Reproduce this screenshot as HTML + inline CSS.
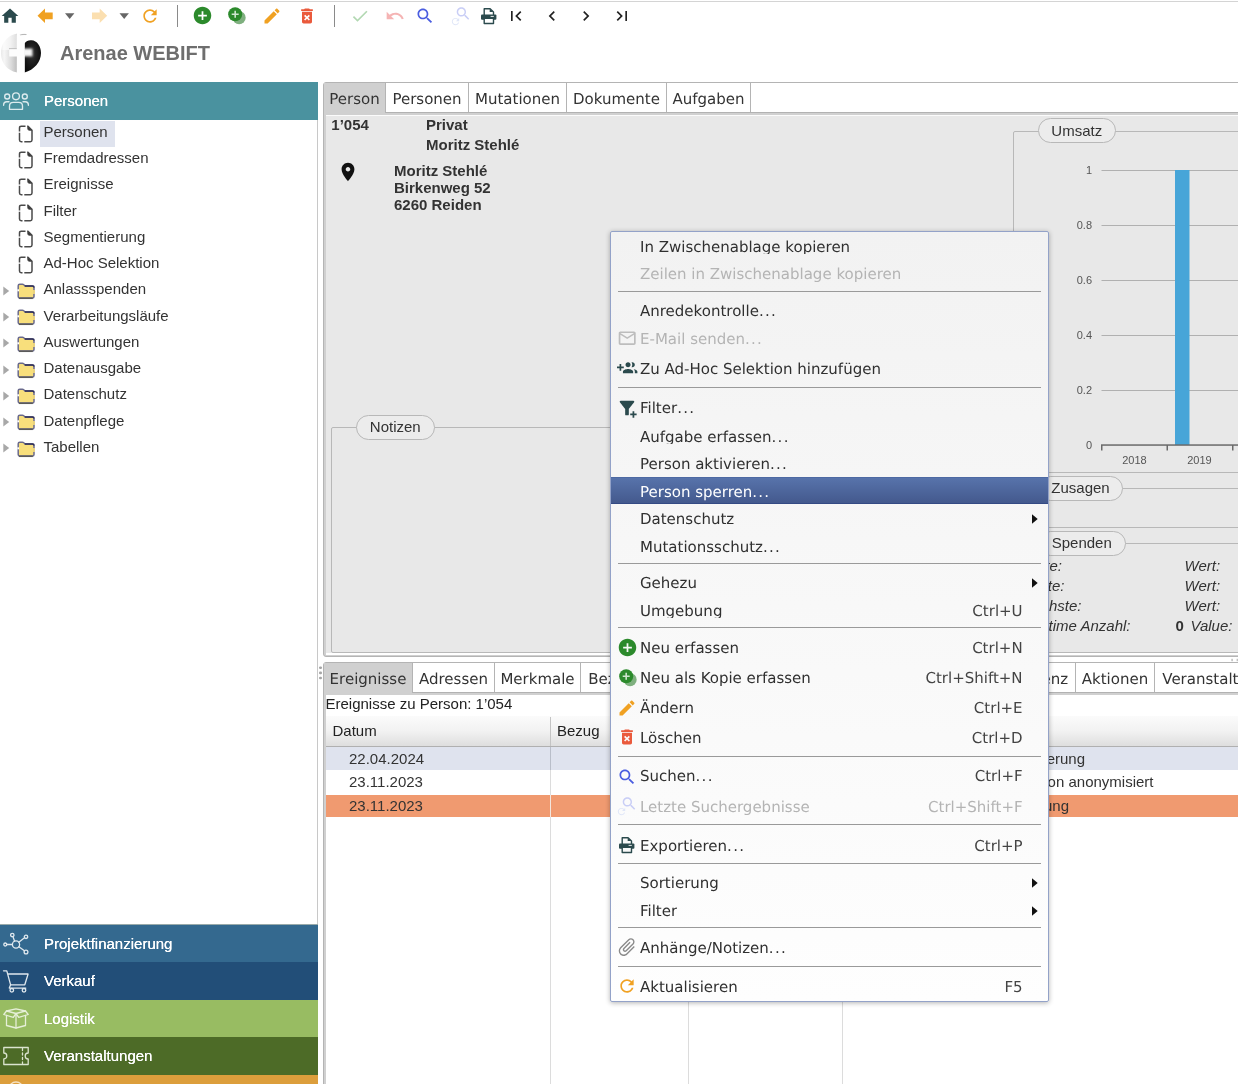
<!DOCTYPE html>
<html lang="de">
<head>
<meta charset="utf-8">
<title>Arenae WEBIFT</title>
<style>
*{box-sizing:border-box;margin:0;padding:0}
html,body{width:1238px;height:1084px;overflow:hidden;background:#fff}
body{position:relative;will-change:transform;font-family:"Liberation Sans",sans-serif;font-size:15px;color:#333}
.abs{position:absolute}
svg{display:block;position:absolute;overflow:visible}
.dv{font-family:"DejaVu Sans","Liberation Sans",sans-serif;text-rendering:geometricPrecision}
/* top */
#topline{left:0;top:1px;width:1238px;height:1px;background:#d4d4d4}
#title{left:60px;top:41px;font-size:20px;font-weight:bold;color:#6e6e6e;line-height:24px;white-space:nowrap}
/* sidebar */
#sidebar{left:0;top:82px;width:318px;height:1002px;background:#fff}
#sideborder{left:317px;top:82px;width:1px;height:1002px;background:#c8c8c8}
#split{left:319px;top:82px;width:4px;height:1002px;background:#fff}
.sec{left:0;width:318px;color:#fff;font-size:15px;line-height:38px;padding-left:44px;white-space:nowrap;text-shadow:0 0 0 #fff}
.ti{left:43.5px;font-size:15px;line-height:20px;white-space:nowrap;color:#333}
#tsel{left:40px;top:121px;width:75px;height:25.5px;background:#dfe3ee}
/* main */
#panel1{left:323px;top:82px;width:930px;height:575px;border:1px solid #b4b4b4;border-radius:3px;background:#d0d0d0}
#panel1 .tabs{left:0;top:0;width:928px;height:30px;background:#fff;border-bottom:1px solid #b2b2b2}
.tab{top:0;height:29px;font-size:15px;line-height:33px;white-space:nowrap;color:#333;border-right:1px solid #b4b4b4;text-align:center}
.tab.sel{background:#d0d0d0;height:30px}
.tab span{display:block;height:23.5px;overflow:hidden}
#content1{left:2px;top:32px;width:930px;height:538px;background:#e8e8e8}
.b{font-weight:bold;font-size:15px;line-height:17px;white-space:nowrap;color:#333}
.fs{border:1px solid #b8b8b8;border-radius:2px}
.lg{height:25px;border:1px solid #b8b8b8;border-radius:13px;background:#ececec;font-size:15px;line-height:23px;text-align:center;color:#333;white-space:nowrap}
.it{font-style:italic;font-size:15px;line-height:18px;white-space:nowrap;color:#333}
#panel2{left:323px;top:662px;width:930px;height:440px;border:1px solid #b4b4b4;border-radius:3px;background:#d0d0d0}
#panel2 .tabs{left:0;top:0;width:928px;height:30px;background:#fff;border-bottom:1px solid #b2b2b2}
#content2{left:2px;top:32px;width:930px;height:420px;background:#fff;overflow:hidden}
#ghead{background:linear-gradient(#fbfbfb,#f2f2f2 50%,#dedede);border-bottom:1px solid #b0b0b0}
.gh{font-size:15px;line-height:20px;color:#222;white-space:nowrap}
.gr{font-size:15px;line-height:20px;color:#333;white-space:nowrap}
#menu{border:1px solid #93a2c8;border-radius:2px;background:linear-gradient(#f2f2f2,#f7f7f7 40%,#fefefe);box-shadow:0 1px 5px rgba(0,0,0,.3)}
.mi{font-size:15px;line-height:20px;white-space:nowrap;color:#303030;overflow:hidden}
.el{letter-spacing:1.3px}
.mi.dis{color:#b4b4b4}
.mi.hl{color:#fff}
.mi.sc{color:#444}
.mi.sc.dis{color:#b4b4b4}
</style>
</head>
<body>
<div id="topline" class="abs"></div>
<!--TOOLBAR-->
<svg style="left:0px;top:6px" width="20" height="20" viewBox="0 0 24 24"><path fill="#2b4a4d" d="M10 20v-6h4v6h5v-8h3L12 3 2 12h3v8z"/></svg>
<svg style="left:0;top:0" width="660" height="32" viewBox="0 0 660 32"><polygon fill="#f0a122" points="37.5,15.8 45,8.5 45,12.4 52.7,12.4 52.7,19.2 45,19.2 45,23.1"/><polygon fill="#666" points="65,13.3 74.4,13.3 69.7,19"/><polygon fill="#fbdfb0" points="107.2,15.8 99.7,8.5 99.7,12.4 92,12.4 92,19.2 99.7,19.2 99.7,23.1"/><polygon fill="#666" points="119.5,13.3 128.9,13.3 124.2,19"/><rect x="177" y="5" width="1" height="22" fill="#8a8a8a"/><rect x="334" y="5" width="1" height="22" fill="#8a8a8a"/></svg>
<svg style="left:140px;top:6px" width="20" height="20" viewBox="0 0 24 24"><path fill="#f0a122" d="M17.65 6.35C16.2 4.9 14.21 4 12 4c-4.42 0-7.99 3.58-7.99 8s3.57 8 7.99 8c3.73 0 6.84-2.55 7.73-6h-2.08c-.82 2.33-3.04 4-5.65 4-3.31 0-6-2.69-6-6s2.69-6 6-6c1.66 0 3.14.69 4.22 1.78L13 11h7V4l-2.35 2.35z"/></svg>
<svg style="left:191.5px;top:5.4px" width="21" height="21" viewBox="0 0 24 24"><path fill="#2c8a2c" d="M12 2C6.48 2 2 6.48 2 12s4.48 10 10 10 10-4.480 10-10S17.520 2 12 2zm5 11h-4v4h-2v-4H7v-2h4V7h2v4h4v2z"/></svg>
<svg style="left:226px;top:5px" width="21" height="21" viewBox="0 0 24 24"><circle cx="15" cy="14.500" r="7.500" fill="#7fb07f"/><circle cx="10.500" cy="10.500" r="8" fill="#2c8a2c"/><path d="M6.500 10.500h8M10.500 6.500v8" stroke="#cfe6cf" stroke-width="1.800" fill="none"/></svg>
<svg style="left:262px;top:6px" width="20" height="20" viewBox="0 0 24 24"><path fill="#f0a122" d="M3 17.25V21h3.75L17.81 9.94l-3.75-3.75L3 17.25zM20.71 7.04c.39-.39.39-1.02 0-1.41l-2.34-2.34c-.39-.39-1.02-.39-1.41 0l-1.83 1.83 3.75 3.75 1.83-1.83z"/></svg>
<svg style="left:297px;top:6px" width="20" height="20" viewBox="0 0 24 24"><path fill="#ea5a3c" d="M6 19c0 1.1.9 2 2 2h8c1.1 0 2-.9 2-2V7H6v12zm2.460-7.120l1.410-1.410L12 12.590l2.120-2.120 1.410 1.410L13.410 14l2.120 2.120-1.410 1.410L12 15.410l-2.120 2.120-1.410-1.410L10.590 14l-2.130-2.120zM15.500 4l-1-1h-5l-1 1H5v2h14V4z"/></svg>
<svg style="left:350px;top:6px" width="20" height="20" viewBox="0 0 24 24"><path fill="#b2d8b2" d="M9 16.17L4.83 12l-1.420 1.410L9 19 21 7l-1.410-1.410z"/></svg>
<svg style="left:385px;top:6px" width="20" height="20" viewBox="0 0 24 24"><path fill="#f5b4b4" d="M12.500 8c-2.650 0-5.050.990-6.900 2.600L2 7v9h9l-3.620-3.620c1.390-1.160 3.160-1.880 5.120-1.880 3.540 0 6.550 2.310 7.600 5.500l2.370-.780C21.080 11.030 17.150 8 12.500 8z"/></svg>
<svg style="left:415px;top:6px" width="20" height="20" viewBox="0 0 24 24"><path fill="#4a5de0" d="M15.500 14h-.790l-.280-.270C15.410 12.590 16 11.110 16 9.500 16 5.910 13.090 3 9.500 3S3 5.910 3 9.500 5.910 16 9.500 16c1.610 0 3.090-.590 4.230-1.570l.270.280v.790l5 4.990L20.490 19l-4.990-5zm-6 0C7.010 14 5 11.990 5 9.500S7.010 5 9.500 5 14 7.010 14 9.500 11.990 14 9.500 14z"/></svg>
<svg style="left:449.500px;top:6px" width="22" height="22" viewBox="0 0 24 24"><g transform="translate(5,-1) scale(.78)"><path fill="#c9cef6" d="M15.500 14h-.790l-.280-.270C15.410 12.590 16 11.110 16 9.500 16 5.910 13.090 3 9.500 3S3 5.910 3 9.500 5.910 16 9.500 16c1.610 0 3.090-.590 4.230-1.570l.270.280v.790l5 4.990L20.490 19l-4.990-5zm-6 0C7.010 14 5 11.990 5 9.500S7.010 5 9.500 5 14 7.010 14 9.500 11.990 14 9.500 14z"/></g><g transform="translate(0,11) scale(.5)"><path fill="#dfe6f8" d="M17.65 6.35C16.2 4.9 14.21 4 12 4c-4.42 0-7.99 3.58-7.99 8s3.57 8 7.99 8c3.73 0 6.84-2.55 7.73-6h-2.08c-.82 2.33-3.04 4-5.65 4-3.31 0-6-2.69-6-6s2.69-6 6-6c1.66 0 3.14.69 4.22 1.78L13 11h7V4l-2.35 2.35z"/></g></svg>
<svg style="left:481.4px;top:8px" width="17" height="17" viewBox="0 0 17 17"><path d="M3.200 7V.700h5.900L12.500 4v3" fill="#fff" stroke="#2b4a4d" stroke-width="1.400" stroke-linejoin="round"/><path d="M8.700 .700v3.200h3.600z" fill="#2b4a4d"/><rect x="0" y="6.600" width="15.400" height="5.200" rx="1" fill="#2b4a4d"/><rect x="9.600" y="7.900" width="3.200" height="1.100" fill="#fff" opacity=".8"/><rect x="3.200" y="10.200" width="9.300" height="5.300" fill="#fff" stroke="#2b4a4d" stroke-width="1.400" stroke-linejoin="round"/></svg>
<svg style="left:506px;top:6px" width="20" height="20" viewBox="0 0 24 24"><path fill="#222" d="M18.410 16.590L13.820 12l4.590-4.590L17 6l-6 6 6 6zM6 6h2v12H6z"/></svg>
<svg style="left:542px;top:6px" width="20" height="20" viewBox="0 0 24 24"><path fill="#222" d="M15.410 7.410L14 6l-6 6 6 6 1.410-1.410L10.830 12z"/></svg>
<svg style="left:576px;top:6px" width="20" height="20" viewBox="0 0 24 24"><path fill="#222" d="M10 6L8.590 7.410 13.170 12l-4.580 4.590L10 18l6-6z"/></svg>
<svg style="left:612px;top:6px" width="20" height="20" viewBox="0 0 24 24"><path fill="#222" d="M5.590 7.410L10.180 12l-4.590 4.590L7 18l6-6-6-6zM16 6h2v12h-2z"/></svg>
<!--LOGO-->
<svg style="left:0;top:32px" width="44" height="44" viewBox="0 32 44 44">
<defs>
<linearGradient id="lgU" x1="0" y1="0" x2="1" y2="0"><stop offset="0" stop-color="#e9e9e9"/><stop offset=".22" stop-color="#fbfbfb"/><stop offset=".6" stop-color="#f3f3f3"/><stop offset="1" stop-color="#dedede"/></linearGradient>
<linearGradient id="lgL" x1="0" y1="0" x2="1" y2="0"><stop offset="0" stop-color="#e6e6e6"/><stop offset=".25" stop-color="#f6f6f6"/><stop offset=".65" stop-color="#dcdcdc"/><stop offset="1" stop-color="#bdbdbd"/></linearGradient>
<radialGradient id="lgB" cx="45%" cy="42%" r="70%"><stop offset="0" stop-color="#333"/><stop offset=".6" stop-color="#161616"/><stop offset="1" stop-color="#060606"/></radialGradient>
<filter id="lgF" x="-30%" y="-30%" width="160%" height="160%"><feGaussianBlur stdDeviation="1"/></filter>
<filter id="lgS" x="-30%" y="-30%" width="160%" height="160%"><feGaussianBlur stdDeviation="0.600"/></filter>
<clipPath id="lgC"><path d="M24.600 43.500 C26 40.500 29 40 31.500 40.200 C37 40.500 41 46 41 53 C41 62 34 70 24.600 72.500Z"/></clipPath>
<clipPath id="lgD"><path d="M27 34 C10 30.500 1 42 1 53 C1 64 9 73 22 73 L25 72.500 L25 36 Z"/></clipPath>
</defs>
<g clip-path="url(#lgD)">
<rect x="0" y="32" width="17" height="18" fill="url(#lgU)"/>
<rect x="0" y="50" width="17" height="24" fill="url(#lgL)"/>
<rect x="9" y="48.200" width="8" height="1.300" fill="#bcbcbc" filter="url(#lgS)"/>
<path d="M20 35.300 C22 34.300 24.500 34 27.500 34.600" stroke="#b8b8b8" stroke-width="1.300" fill="none" filter="url(#lgS)"/>
</g>
<path d="M24.600 43.500 C26 40.500 29 40 31.500 40.200 C37 40.500 41 46 41 53 C41 62 34 70 24.600 72.500Z" fill="url(#lgB)"/>
<g clip-path="url(#lgC)"><rect x="23" y="48.600" width="9.500" height="7.800" fill="#f6f6f6" filter="url(#lgF)"/></g>
<rect x="16.800" y="35.300" width="7.800" height="37.600" fill="#fefefe"/>
<rect x="9.200" y="49.200" width="15.400" height="7.300" fill="#fdfdfd"/>
</svg>
<div id="title" class="abs">Arenae WEBIFT</div>
<!--SIDEBAR-->
<div id="sidebar" class="abs"></div><div id="sideborder" class="abs"></div>
<div class="abs sec" style="top:82px;height:38px;background:#4a929f;line-height:37.5px">Personen</div>
<svg style="left:2px;top:90px" width="28" height="22" viewBox="0 0 28 22" fill="none" stroke="#dcebee" stroke-width="1.350" stroke-linecap="round" stroke-linejoin="round"><circle cx="14" cy="6.300" r="3.400"/><circle cx="5.200" cy="6.500" r="2.500"/><circle cx="22.800" cy="6.500" r="2.500"/><path d="M7.500 19.300v-3.300c0-2.200 1.600-3.600 3.800-3.600h5.400c2.200 0 3.800 1.400 3.800 3.600v3.300z"/><path d="M1.600 15.200c0-2.200 1.300-3.500 3.200-3.500h2.200M26.400 15.200c0-2.200-1.300-3.500-3.200-3.500h-2.200"/></svg>
<div id="tsel" class="abs"></div>
<div class="abs ti" style="top:121.80px">Personen</div>
<svg style="left:18px;top:125.2px" width="16" height="19" viewBox="0 0 16 19" fill="none" stroke="#4a4a4a" stroke-width="1.500" stroke-linejoin="round"><path d="M7.500 1.200H3.200c-1.100 0-1.700.600-1.700 1.700v3.500M1.500 7.800v7.200c0 1.100.600 1.700 1.700 1.700h1.300M6.300 16.700h6c1.100 0 1.700-.600 1.700-1.700V5.200L10 1.200H9.300"/><path d="M9.800 1.300v2.500c0 .900.500 1.400 1.400 1.400h2.600z" fill="#333" stroke-width="1"/></svg>
<div class="abs ti" style="top:148.05px">Fremdadressen</div>
<svg style="left:18px;top:151.4px" width="16" height="19" viewBox="0 0 16 19" fill="none" stroke="#4a4a4a" stroke-width="1.500" stroke-linejoin="round"><path d="M7.500 1.200H3.200c-1.100 0-1.700.600-1.700 1.700v3.500M1.500 7.800v7.200c0 1.100.600 1.700 1.700 1.700h1.300M6.300 16.700h6c1.100 0 1.700-.600 1.700-1.700V5.200L10 1.200H9.300"/><path d="M9.800 1.300v2.500c0 .900.500 1.400 1.400 1.400h2.600z" fill="#333" stroke-width="1"/></svg>
<div class="abs ti" style="top:174.30px">Ereignisse</div>
<svg style="left:18px;top:177.7px" width="16" height="19" viewBox="0 0 16 19" fill="none" stroke="#4a4a4a" stroke-width="1.500" stroke-linejoin="round"><path d="M7.500 1.200H3.200c-1.100 0-1.700.600-1.700 1.700v3.500M1.500 7.800v7.200c0 1.100.600 1.700 1.700 1.700h1.300M6.300 16.700h6c1.100 0 1.700-.600 1.700-1.700V5.200L10 1.200H9.300"/><path d="M9.800 1.300v2.500c0 .900.500 1.400 1.400 1.400h2.600z" fill="#333" stroke-width="1"/></svg>
<div class="abs ti" style="top:200.55px">Filter</div>
<svg style="left:18px;top:203.9px" width="16" height="19" viewBox="0 0 16 19" fill="none" stroke="#4a4a4a" stroke-width="1.500" stroke-linejoin="round"><path d="M7.500 1.200H3.200c-1.100 0-1.700.600-1.700 1.700v3.500M1.500 7.800v7.200c0 1.100.600 1.700 1.700 1.700h1.300M6.300 16.700h6c1.100 0 1.700-.600 1.700-1.700V5.200L10 1.200H9.300"/><path d="M9.800 1.300v2.500c0 .900.500 1.400 1.400 1.400h2.600z" fill="#333" stroke-width="1"/></svg>
<div class="abs ti" style="top:226.80px">Segmentierung</div>
<svg style="left:18px;top:230.2px" width="16" height="19" viewBox="0 0 16 19" fill="none" stroke="#4a4a4a" stroke-width="1.500" stroke-linejoin="round"><path d="M7.500 1.200H3.200c-1.100 0-1.700.600-1.700 1.700v3.500M1.500 7.800v7.200c0 1.100.600 1.700 1.700 1.700h1.300M6.300 16.700h6c1.100 0 1.700-.600 1.700-1.700V5.200L10 1.200H9.300"/><path d="M9.800 1.300v2.500c0 .900.500 1.400 1.400 1.400h2.600z" fill="#333" stroke-width="1"/></svg>
<div class="abs ti" style="top:253.05px">Ad-Hoc Selektion</div>
<svg style="left:18px;top:256.4px" width="16" height="19" viewBox="0 0 16 19" fill="none" stroke="#4a4a4a" stroke-width="1.500" stroke-linejoin="round"><path d="M7.500 1.200H3.200c-1.100 0-1.700.600-1.700 1.700v3.500M1.500 7.800v7.200c0 1.100.600 1.700 1.700 1.700h1.300M6.300 16.700h6c1.100 0 1.700-.600 1.700-1.700V5.200L10 1.200H9.300"/><path d="M9.800 1.300v2.500c0 .900.500 1.400 1.400 1.400h2.600z" fill="#333" stroke-width="1"/></svg>
<div class="abs ti" style="top:279.30px">Anlassspenden</div>
<svg style="left:16px;top:283.0px" width="20" height="17" viewBox="0 0 20 17"><path d="M2.200 2.800c0-1 .600-1.600 1.600-1.600h2.600c.600 0 1 .200 1.400.600l1.300 1.200h7.300c1 0 1.600.600 1.600 1.600v8.800c0 1-.600 1.600-1.600 1.600H3.800c-1 0-1.600-.600-1.600-1.600z" fill="#f8df7c" stroke="#6a6a8c" stroke-width="1.500"/><path d="M8.800 3h7.600c1 0 1.600.600 1.600 1.600" fill="none" stroke="#2c2c55" stroke-width="1.500"/><path d="M3 15.300h13.800" stroke="#5a5a5a" stroke-width="1.500"/><path d="M2.200 6.300v2" stroke="#fff" stroke-width="1.700"/><path d="M18 7v4" stroke="#f8df7c" stroke-width="1.700"/></svg><svg style="left:3px;top:285.8px" width="7" height="10" viewBox="0 0 7 10"><path d="M.300.500L6.200 5 .300 9.500z" fill="#a8a8a8"/></svg>
<div class="abs ti" style="top:305.55px">Verarbeitungsläufe</div>
<svg style="left:16px;top:309.2px" width="20" height="17" viewBox="0 0 20 17"><path d="M2.200 2.800c0-1 .600-1.600 1.600-1.600h2.600c.600 0 1 .200 1.400.600l1.300 1.200h7.300c1 0 1.600.600 1.600 1.600v8.800c0 1-.600 1.600-1.600 1.600H3.800c-1 0-1.600-.600-1.600-1.600z" fill="#f8df7c" stroke="#6a6a8c" stroke-width="1.500"/><path d="M8.800 3h7.600c1 0 1.600.600 1.600 1.600" fill="none" stroke="#2c2c55" stroke-width="1.500"/><path d="M3 15.300h13.800" stroke="#5a5a5a" stroke-width="1.500"/><path d="M2.200 6.300v2" stroke="#fff" stroke-width="1.700"/><path d="M18 7v4" stroke="#f8df7c" stroke-width="1.700"/></svg><svg style="left:3px;top:312.1px" width="7" height="10" viewBox="0 0 7 10"><path d="M.300.500L6.200 5 .300 9.500z" fill="#a8a8a8"/></svg>
<div class="abs ti" style="top:331.80px">Auswertungen</div>
<svg style="left:16px;top:335.5px" width="20" height="17" viewBox="0 0 20 17"><path d="M2.200 2.800c0-1 .600-1.600 1.600-1.600h2.600c.600 0 1 .200 1.400.600l1.300 1.200h7.300c1 0 1.600.600 1.600 1.600v8.800c0 1-.600 1.600-1.600 1.600H3.800c-1 0-1.600-.600-1.600-1.600z" fill="#f8df7c" stroke="#6a6a8c" stroke-width="1.500"/><path d="M8.800 3h7.600c1 0 1.600.600 1.600 1.600" fill="none" stroke="#2c2c55" stroke-width="1.500"/><path d="M3 15.300h13.800" stroke="#5a5a5a" stroke-width="1.500"/><path d="M2.200 6.300v2" stroke="#fff" stroke-width="1.700"/><path d="M18 7v4" stroke="#f8df7c" stroke-width="1.700"/></svg><svg style="left:3px;top:338.3px" width="7" height="10" viewBox="0 0 7 10"><path d="M.300.500L6.200 5 .300 9.500z" fill="#a8a8a8"/></svg>
<div class="abs ti" style="top:358.05px">Datenausgabe</div>
<svg style="left:16px;top:361.8px" width="20" height="17" viewBox="0 0 20 17"><path d="M2.200 2.800c0-1 .600-1.600 1.600-1.600h2.600c.600 0 1 .200 1.400.600l1.300 1.200h7.300c1 0 1.600.600 1.600 1.600v8.800c0 1-.600 1.600-1.600 1.600H3.800c-1 0-1.600-.600-1.600-1.600z" fill="#f8df7c" stroke="#6a6a8c" stroke-width="1.500"/><path d="M8.800 3h7.600c1 0 1.600.600 1.600 1.600" fill="none" stroke="#2c2c55" stroke-width="1.500"/><path d="M3 15.300h13.800" stroke="#5a5a5a" stroke-width="1.500"/><path d="M2.200 6.300v2" stroke="#fff" stroke-width="1.700"/><path d="M18 7v4" stroke="#f8df7c" stroke-width="1.700"/></svg><svg style="left:3px;top:364.6px" width="7" height="10" viewBox="0 0 7 10"><path d="M.300.500L6.200 5 .300 9.500z" fill="#a8a8a8"/></svg>
<div class="abs ti" style="top:384.30px">Datenschutz</div>
<svg style="left:16px;top:388.0px" width="20" height="17" viewBox="0 0 20 17"><path d="M2.200 2.800c0-1 .600-1.600 1.600-1.600h2.600c.600 0 1 .200 1.400.600l1.300 1.200h7.300c1 0 1.600.600 1.600 1.600v8.800c0 1-.600 1.600-1.600 1.600H3.800c-1 0-1.600-.600-1.600-1.600z" fill="#f8df7c" stroke="#6a6a8c" stroke-width="1.500"/><path d="M8.800 3h7.600c1 0 1.600.600 1.600 1.600" fill="none" stroke="#2c2c55" stroke-width="1.500"/><path d="M3 15.300h13.800" stroke="#5a5a5a" stroke-width="1.500"/><path d="M2.200 6.300v2" stroke="#fff" stroke-width="1.700"/><path d="M18 7v4" stroke="#f8df7c" stroke-width="1.700"/></svg><svg style="left:3px;top:390.8px" width="7" height="10" viewBox="0 0 7 10"><path d="M.300.500L6.200 5 .300 9.500z" fill="#a8a8a8"/></svg>
<div class="abs ti" style="top:410.55px">Datenpflege</div>
<svg style="left:16px;top:414.2px" width="20" height="17" viewBox="0 0 20 17"><path d="M2.200 2.800c0-1 .600-1.600 1.600-1.600h2.600c.600 0 1 .200 1.400.600l1.300 1.200h7.300c1 0 1.600.600 1.600 1.600v8.800c0 1-.600 1.600-1.600 1.600H3.800c-1 0-1.600-.600-1.600-1.600z" fill="#f8df7c" stroke="#6a6a8c" stroke-width="1.500"/><path d="M8.800 3h7.600c1 0 1.600.600 1.600 1.600" fill="none" stroke="#2c2c55" stroke-width="1.500"/><path d="M3 15.300h13.800" stroke="#5a5a5a" stroke-width="1.500"/><path d="M2.200 6.300v2" stroke="#fff" stroke-width="1.700"/><path d="M18 7v4" stroke="#f8df7c" stroke-width="1.700"/></svg><svg style="left:3px;top:417.1px" width="7" height="10" viewBox="0 0 7 10"><path d="M.300.500L6.200 5 .300 9.500z" fill="#a8a8a8"/></svg>
<div class="abs ti" style="top:436.80px">Tabellen</div>
<svg style="left:16px;top:440.5px" width="20" height="17" viewBox="0 0 20 17"><path d="M2.200 2.800c0-1 .600-1.600 1.600-1.600h2.600c.600 0 1 .200 1.400.600l1.300 1.200h7.300c1 0 1.600.600 1.600 1.600v8.800c0 1-.600 1.600-1.600 1.600H3.800c-1 0-1.600-.600-1.600-1.600z" fill="#f8df7c" stroke="#6a6a8c" stroke-width="1.500"/><path d="M8.800 3h7.600c1 0 1.600.600 1.600 1.600" fill="none" stroke="#2c2c55" stroke-width="1.500"/><path d="M3 15.300h13.800" stroke="#5a5a5a" stroke-width="1.500"/><path d="M2.200 6.300v2" stroke="#fff" stroke-width="1.700"/><path d="M18 7v4" stroke="#f8df7c" stroke-width="1.700"/></svg><svg style="left:3px;top:443.3px" width="7" height="10" viewBox="0 0 7 10"><path d="M.300.500L6.200 5 .300 9.500z" fill="#a8a8a8"/></svg>
<div class="abs" style="left:0;top:923.5px;width:318px;height:1px;background:#9aa"></div>
<div class="abs sec" style="top:924.5px;height:38px;background:#34698f">Projektfinanzierung</div>
<div class="abs sec" style="top:962px;height:38px;background:#224e78">Verkauf</div>
<div class="abs sec" style="top:999.5px;height:38px;background:#98bc62">Logistik</div>
<div class="abs sec" style="top:1037px;height:38px;background:#4d6b27">Veranstaltungen</div>
<div class="abs" style="left:0;top:1074.500px;width:318px;height:10px;background:#dc9e3c"></div>
<svg style="left:2px;top:932px" width="28" height="24" viewBox="0 0 28 24" fill="none" stroke="#dfe8ee" stroke-width="1.300" stroke-linecap="round" stroke-linejoin="round"><circle cx="14" cy="12.500" r="3.600"/><circle cx="3.300" cy="12.500" r="1.500"/><circle cx="10.300" cy="3" r="1.700"/><circle cx="24" cy="4.800" r="1.700"/><circle cx="24" cy="20" r="1.900"/><path d="M4.800 12.500h5.600M10.900 4.600l1.700 4.600M16.800 10.200l5.700-4.500M16.900 14.800l5.500 4"/></svg>
<svg style="left:2px;top:969px" width="28" height="25" viewBox="0 0 28 25" fill="none" stroke="#dfe8ee" stroke-width="1.300" stroke-linecap="round" stroke-linejoin="round"><path d="M1.500 1.800h3.300l3.800 14h14.200l3.300-10.800H6.300"/><path d="M8.600 15.800l-1.300 3.300h16.500"/><circle cx="9.800" cy="21.300" r="1.800"/><circle cx="22" cy="21.300" r="1.800"/></svg>
<svg style="left:2px;top:1007px" width="28" height="23" viewBox="0 0 28 23" stroke="#e6efd8" fill="none" stroke-width="1.300" stroke-linecap="round" stroke-linejoin="round"><path d="M4.500 8.500v10l9.500 2.500 9.500-2.500v-10"/><path d="M14 6.500v14.500"/><path d="M14 6.500L4.500 4 1.800 7.500l9.500 2.800zM14 6.500L23.500 4l2.700 3.500-9.500 2.800z"/><path d="M4.500 4L14 1.800 23.500 4"/></svg>
<svg style="left:2px;top:1046px" width="28" height="20" viewBox="0 0 28 20" stroke="#dbe4cf" fill="none" stroke-width="1.300" stroke-linecap="round" stroke-linejoin="round"><path d="M1.800 1.500h24.400v5.500a3 3 0 0 0 0 6v5.500H1.800v-5.500a3 3 0 0 0 0-6z"/><path d="M20.500 2.500v2M20.500 7v2M20.500 11.500v2M20.500 16v1.500"/></svg>
<svg style="left:8px;top:1080.500px" width="16" height="8" viewBox="0 0 16 8" fill="none" stroke="#f6e3c4" stroke-width="1.300"><circle cx="8" cy="8" r="7"/></svg>
<!--MAIN-->
<div id="panel1" class="abs">
<div class="abs tabs"></div>
<div class="abs tab dv sel" style="left:0px;width:62px"><span>Person</span></div>
<div class="abs tab dv" style="left:62px;width:83px"><span>Personen</span></div>
<div class="abs tab dv" style="left:145px;width:98px"><span>Mutationen</span></div>
<div class="abs tab dv" style="left:243px;width:100px"><span>Dokumente</span></div>
<div class="abs tab dv" style="left:343px;width:84px"><span>Aufgaben</span></div>
<div id="content1" class="abs">
<div class="abs toplight" style="left:0;top:0;width:930px;height:1.200px;background:#fbfbfb"></div>
<div class="abs b" style="left:5.3px;top:1.1px;">1’054</div>
<div class="abs b" style="left:100.0px;top:1.1px;">Privat</div>
<div class="abs b" style="left:100.0px;top:21.2px;">Moritz Stehlé</div>
<div class="abs b" style="left:68.0px;top:46.7px;">Moritz Stehlé</div>
<div class="abs b" style="left:68.0px;top:63.9px;">Birkenweg 52</div>
<div class="abs b" style="left:68.0px;top:80.9px;">6260 Reiden</div>
<svg style="left:11.0px;top:46.3px" width="22" height="22" viewBox="0 0 24 24"><path fill="#111" d="M12 2C8.130 2 5 5.130 5 9c0 5.250 7 13 7 13s7-7.750 7-13c0-3.870-3.130-7-7-7zm0 9.500c-1.380 0-2.500-1.120-2.500-2.500s1.120-2.500 2.500-2.500 2.500 1.120 2.500 2.500-1.120 2.500-2.500 2.500z"/></svg>
<div class="abs fs" style="left:5.0px;top:312.0px;width:675px;height:226px"></div>
<div class="abs lg" style="left:30.0px;top:300.0px;width:78.500px;line-height:22px">Notizen</div>
<div class="abs fs" style="left:687.0px;top:16.0px;width:260px;height:341.500px"></div>
<div class="abs lg" style="left:712.0px;top:3.0px;width:77.500px">Umsatz</div>
<svg style="left:694.0px;top:35.0px" width="220" height="330" viewBox="1020 150 220 330" font-family="Liberation Sans, sans-serif" font-size="11px" fill="#555"><rect x="1101.500" y="170" width="140" height="1" fill="#b0b0b0"/><text x="1092" y="174" text-anchor="end">1</text><rect x="1101.500" y="225" width="140" height="1" fill="#b0b0b0"/><text x="1092" y="229" text-anchor="end">0.8</text><rect x="1101.500" y="280" width="140" height="1" fill="#b0b0b0"/><text x="1092" y="284" text-anchor="end">0.6</text><rect x="1101.500" y="335" width="140" height="1" fill="#b0b0b0"/><text x="1092" y="339" text-anchor="end">0.4</text><rect x="1101.500" y="390" width="140" height="1" fill="#b0b0b0"/><text x="1092" y="394" text-anchor="end">0.2</text><text x="1092" y="449" text-anchor="end">0</text><rect x="1175" y="170" width="14.500" height="275" fill="#47a5d8"/><rect x="1101" y="444.300" width="140" height="1.500" fill="#6a6a6a"/><rect x="1101" y="445" width="1.500" height="5.500" fill="#6a6a6a"/><rect x="1166.5" y="445" width="1.500" height="5.500" fill="#6a6a6a"/><rect x="1232" y="445" width="1.500" height="5.500" fill="#6a6a6a"/><text x="1134.500" y="464" text-anchor="middle">2018</text><text x="1199.500" y="464" text-anchor="middle">2019</text></svg>
<div class="abs fs" style="left:687.0px;top:373.0px;width:260px;height:39.500px"></div>
<div class="abs lg" style="left:712.0px;top:361.0px;width:85px;line-height:21px">Zusagen</div>
<div class="abs fs" style="left:687.0px;top:428.0px;width:260px;height:110px"></div>
<div class="abs lg" style="left:712.0px;top:416.0px;width:87.500px;line-height:21px">Spenden</div>
<div class="abs it" style="right:194.0px;top:442.2px">Erste:</div>
<div class="abs it" style="left:858.5px;top:442.2px">Wert:</div>
<div class="abs it" style="right:191.5px;top:462.0px">Letzte:</div>
<div class="abs it" style="left:858.5px;top:462.0px">Wert:</div>
<div class="abs it" style="right:174.5px;top:481.9px">Höchste:</div>
<div class="abs it" style="left:858.5px;top:481.9px">Wert:</div>
<div class="abs it" style="right:125.5px;top:501.7px">Lifetime Anzahl:</div>
<div class="abs it" style="left:864.5px;top:501.7px">Value:</div>
<div class="abs b" style="left:849.5px;top:501.7px;line-height:18px">0</div>
</div>
<div class="abs" style="left:2px;top:570px;width:930px;height:1.500px;background:#fff"></div>
</div>
<!--LOWER-->
<svg style="left:318px;top:664px" width="6" height="20" viewBox="0 0 6 20"><rect x="1" y="2.400" width="3" height="2.600" rx="1.200" fill="#a6a6a6"/><rect x="1" y="7.600" width="3" height="2.600" rx="1.200" fill="#a6a6a6"/><rect x="1" y="12.700" width="3" height="2.600" rx="1.200" fill="#a6a6a6"/></svg>
<svg style="left:1228px;top:657px" width="12" height="6" viewBox="0 0 12 6"><rect x="3.300" y="1.800" width="1.600" height="2.400" fill="#c0c0c0"/><rect x="8.600" y="1.800" width="1.600" height="2.400" fill="#c0c0c0"/></svg>
<div id="panel2" class="abs">
<div class="abs tabs"></div>
<div class="abs tab dv sel" style="left:0px;width:89px"><span>Ereignisse</span></div>
<div class="abs tab dv" style="left:89px;width:82px"><span>Adressen</span></div>
<div class="abs tab dv" style="left:171px;width:86px"><span>Merkmale</span></div>
<div class="abs tab dv" style="left:257px;width:113px"><span>Beziehungen</span></div>
<div class="abs tab dv" style="left:626px;width:126px"><span>Korrespondenz</span></div>
<div class="abs tab dv" style="left:752px;width:79px"><span>Aktionen</span></div>
<div class="abs tab dv" style="left:831px;width:139px"><span>Veranstaltungen</span></div>
<div id="content2" class="abs">
<div class="abs" style="left:-0.5px;top:-0.9px;font-size:15px;line-height:20px;white-space:nowrap;color:#222">Ereignisse zu Person: 1’054</div>
<div class="abs" id="ghead" style="left:0;top:21.0px;width:930px;height:30.500px"></div>
<div class="abs gh" style="left:6.5px;top:25.5px">Datum</div>
<div class="abs gh" style="left:231.0px;top:25.5px">Bezug</div>
<div class="abs" style="left:224.0px;top:22.0px;width:1px;height:29px;background:#c4c4c4"></div>
<div class="abs" style="left:0;top:51.5px;width:930px;height:23px;background:#dfe3ee"></div>
<div class="abs gr" style="left:23.0px;top:53.6px">22.04.2024</div>
<div class="abs gr" style="right:171.0px;top:53.6px">Adressänderung</div>
<div class="abs" style="left:0;top:75.0px;width:930px;height:24px;background:#ffffff"></div>
<div class="abs gr" style="left:23.0px;top:76.7px">23.11.2023</div>
<div class="abs gr" style="right:102.5px;top:76.7px">Person anonymisiert</div>
<div class="abs" style="left:0;top:100.0px;width:930px;height:21.5px;background:#f09a70"></div>
<div class="abs gr" style="left:23.0px;top:100.7px">23.11.2023</div>
<div class="abs gr" style="right:187.0px;top:100.7px">Anonymisierung</div>
<div class="abs" style="left:224.0px;top:51.5px;width:1px;height:340px;background:#dcdcdc"></div>
<div class="abs" style="left:224.0px;top:51.5px;width:1px;height:23px;background:#b9bec9"></div>
<div class="abs" style="left:224.0px;top:100.0px;width:1px;height:21.500px;background:#f3e6de"></div>
<div class="abs" style="left:362.0px;top:51.5px;width:1px;height:340px;background:#dcdcdc"></div>
<div class="abs" style="left:362.0px;top:51.5px;width:1px;height:23px;background:#b9bec9"></div>
<div class="abs" style="left:362.0px;top:100.0px;width:1px;height:21.500px;background:#f3e6de"></div>
<div class="abs" style="left:516.0px;top:51.5px;width:1px;height:340px;background:#dcdcdc"></div>
<div class="abs" style="left:516.0px;top:51.5px;width:1px;height:23px;background:#b9bec9"></div>
<div class="abs" style="left:516.0px;top:100.0px;width:1px;height:21.500px;background:#f3e6de"></div>
</div></div>
<!--MENU-->
<div id="menu" class="abs dv" style="left:610px;top:231px;width:439px;height:771px">
<div class="abs mi" style="left:29.0px;top:4.7px;height:17.3px">In Zwischenablage kopieren</div>
<div class="abs mi dis" style="left:29.0px;top:31.5px;height:18.3px">Zeilen in Zwischenablage kopieren</div>
<div class="abs" style="left:6.5px;top:59.0px;width:423.500px;height:1px;background:#9a9a9a"></div>
<div class="abs mi" style="left:29.0px;top:68.7px;height:20px">Anredekontrolle<span class="el">...</span></div>
<div class="abs mi dis" style="left:29.0px;top:96.8px;height:20px">E-Mail senden<span class="el">...</span></div>
<svg style="left:6.0px;top:95.7px" width="20.4" height="20.4" viewBox="0 0 24 24"><path fill="#bdbdbd" d="M20 4H4c-1.100 0-1.990.900-1.990 2L2 18c0 1.100.900 2 2 2h16c1.100 0 2-.900 2-2V6c0-1.100-.900-2-2-2zm0 14H4V8l8 5 8-5v10zm-8-7L4 6h16l-8 5z"/></svg>
<div class="abs mi" style="left:29.0px;top:127.0px;height:18.3px">Zu Ad-Hoc Selektion hinzufügen</div>
<svg style="left:6.3px;top:125.5px" width="20.4" height="20.4" viewBox="0 0 24 24"><path fill="#2b4a4d" d="M8 10H5V7H3v3H0v2h3v3h2v-3h3v-2zm10 1c1.660 0 2.990-1.340 2.990-3S19.660 5 18 5c-.320 0-.630.050-.910.140.570.810.900 1.790.900 2.860s-.340 2.040-.900 2.860c.280.090.590.140.910.140zm-5 0c1.660 0 2.990-1.340 2.990-3S14.660 5 13 5c-1.660 0-3 1.340-3 3s1.340 3 3 3zm6.620 2.160c.830.730 1.380 1.660 1.380 2.840v2h3v-2c0-1.540-2.370-2.490-4.380-2.840zM13 13c-2 0-6 1-6 3v2h12v-2c0-2-4-3-6-3z"/></svg>
<div class="abs" style="left:6.5px;top:155.2px;width:423.500px;height:1px;background:#9a9a9a"></div>
<div class="abs mi" style="left:29.0px;top:165.5px;height:20px">Filter<span class="el">...</span></div>
<svg style="left:5.0px;top:164.5px" width="22" height="22" viewBox="0 0 24 24"><path fill="#2b4a4d" d="M4.250 5.610C6.270 8.200 10 13 10 13v6c0 .550.450 1 1 1h2c.550 0 1-.450 1-1v-6s3.720-4.800 5.740-7.390c.510-.660.040-1.610-.790-1.610H5.040c-.830 0-1.300.950-.790 1.610z"/><rect x="14.300" y="14" width="9.700" height="9.700" fill="#f4f4f4"/><path d="M15.500 19h7M19 15.500v7" stroke="#2b4a4d" stroke-width="1.900" fill="none"/></svg>
<div class="abs mi" style="left:29.0px;top:194.7px;height:17.3px">Aufgabe erfassen<span class="el">...</span></div>
<div class="abs mi" style="left:29.0px;top:221.5px;height:20px">Person aktivieren<span class="el">...</span></div>
<div class="abs" style="left:0;top:245.0px;width:437px;height:26.800px;background:linear-gradient(#5874ac,#43588c);box-shadow:inset 0 1px 0 #4d69a3,inset 0 -1px 0 #344a84"></div>
<div class="abs mi hl" style="left:29.0px;top:249.8px;height:20px">Person sperren<span class="el">...</span></div>
<div class="abs mi" style="left:29.0px;top:276.6px;height:20px">Datenschutz</div><svg style="left:421.3px;top:282.0px" width="6" height="10" viewBox="0 0 6 10"><path d="M0 .3L5.700 5 0 9.700z" fill="#111"/></svg>
<div class="abs mi" style="left:29.0px;top:304.5px;height:20px">Mutationsschutz<span class="el">...</span></div>
<div class="abs" style="left:6.5px;top:330.8px;width:423.500px;height:1px;background:#9a9a9a"></div>
<div class="abs mi" style="left:29.0px;top:340.6px;height:20px">Gehezu</div><svg style="left:421.3px;top:346.0px" width="6" height="10" viewBox="0 0 6 10"><path d="M0 .3L5.700 5 0 9.700z" fill="#111"/></svg>
<div class="abs mi" style="left:29.0px;top:368.6px;height:17.3px">Umgebung</div><div class="abs mi sc" style="right:25.4px;top:368.6px;height:17.3px">Ctrl+U</div>
<div class="abs" style="left:6.5px;top:395.2px;width:423.500px;height:1px;background:#9a9a9a"></div>
<div class="abs mi" style="left:29.0px;top:405.5px;height:20px">Neu erfassen</div><div class="abs mi sc" style="right:25.4px;top:405.5px;height:20px">Ctrl+N</div>
<svg style="left:5.5px;top:404.5px" width="21" height="21" viewBox="0 0 24 24"><path fill="#2c8a2c" d="M12 2C6.48 2 2 6.48 2 12s4.48 10 10 10 10-4.480 10-10S17.520 2 12 2zm5 11h-4v4h-2v-4H7v-2h4V7h2v4h4v2z"/></svg>
<div class="abs mi" style="left:29.0px;top:435.8px;height:18.3px">Neu als Kopie erfassen</div><div class="abs mi sc" style="right:25.4px;top:435.8px;height:18.3px">Ctrl+Shift+N</div>
<svg style="left:5.5px;top:434.5px" width="21" height="21" viewBox="0 0 24 24"><circle cx="15" cy="14.500" r="7.500" fill="#7fb07f"/><circle cx="10.500" cy="10.500" r="8" fill="#2c8a2c"/><path d="M6.500 10.500h8M10.500 6.500v8" stroke="#cfe6cf" stroke-width="1.800" fill="none"/></svg>
<div class="abs mi" style="left:29.0px;top:466.0px;height:20px">Ändern</div><div class="abs mi sc" style="right:25.4px;top:466.0px;height:20px">Ctrl+E</div>
<svg style="left:6.0px;top:465.5px" width="20" height="20" viewBox="0 0 24 24"><path fill="#f0a122" d="M3 17.25V21h3.75L17.81 9.94l-3.75-3.75L3 17.25zM20.71 7.04c.39-.39.39-1.02 0-1.41l-2.34-2.34c-.39-.39-1.02-.39-1.41 0l-1.83 1.83 3.75 3.75 1.83-1.83z"/></svg>
<div class="abs mi" style="left:29.0px;top:496.0px;height:20px">Löschen</div><div class="abs mi sc" style="right:25.4px;top:496.0px;height:20px">Ctrl+D</div>
<svg style="left:6.0px;top:495.0px" width="20" height="20" viewBox="0 0 24 24"><path fill="#ea5a3c" d="M6 19c0 1.1.9 2 2 2h8c1.1 0 2-.9 2-2V7H6v12zm2.460-7.120l1.410-1.410L12 12.590l2.120-2.120 1.410 1.410L13.410 14l2.120 2.120-1.410 1.410L12 15.410l-2.120 2.120-1.410-1.410L10.590 14l-2.130-2.120zM15.500 4l-1-1h-5l-1 1H5v2h14V4z"/></svg>
<div class="abs" style="left:6.5px;top:523.9px;width:423.500px;height:1px;background:#9a9a9a"></div>
<div class="abs mi" style="left:29.0px;top:534.4px;height:20px">Suchen<span class="el">...</span></div><div class="abs mi sc" style="right:25.4px;top:534.4px;height:20px">Ctrl+F</div>
<svg style="left:5.6px;top:535.2px" width="20" height="20" viewBox="0 0 24 24"><path fill="#4a5de0" d="M15.500 14h-.790l-.280-.270C15.410 12.590 16 11.110 16 9.500 16 5.910 13.090 3 9.500 3S3 5.910 3 9.500 5.910 16 9.500 16c1.610 0 3.090-.590 4.230-1.570l.270.280v.790l5 4.990L20.490 19l-4.990-5zm-6 0C7.010 14 5 11.990 5 9.500S7.010 5 9.500 5 14 7.010 14 9.500 11.990 14 9.500 14z"/></svg>
<div class="abs mi dis" style="left:29.0px;top:564.7px;height:18.3px">Letzte Suchergebnisse</div><div class="abs mi dis sc" style="right:25.4px;top:564.7px;height:18.3px">Ctrl+Shift+F</div>
<svg style="left:5.0px;top:564.0px" width="22" height="22" viewBox="0 0 24 24"><g transform="translate(5,-1) scale(.78)"><path fill="#c9cef6" d="M15.500 14h-.790l-.280-.270C15.410 12.590 16 11.110 16 9.500 16 5.910 13.090 3 9.500 3S3 5.910 3 9.500 5.910 16 9.500 16c1.610 0 3.090-.590 4.230-1.570l.270.280v.790l5 4.990L20.490 19l-4.990-5zm-6 0C7.010 14 5 11.990 5 9.500S7.010 5 9.500 5 14 7.010 14 9.500 11.990 14 9.500 14z"/></g><g transform="translate(0,11) scale(.5)"><path fill="#dfe6f8" d="M17.65 6.35C16.2 4.9 14.21 4 12 4c-4.42 0-7.99 3.58-7.99 8s3.57 8 7.99 8c3.73 0 6.84-2.55 7.73-6h-2.08c-.82 2.33-3.04 4-5.65 4-3.31 0-6-2.69-6-6s2.69-6 6-6c1.66 0 3.14.69 4.22 1.78L13 11h7V4l-2.35 2.35z"/></g></svg>
<div class="abs" style="left:6.5px;top:592.1px;width:423.500px;height:1px;background:#9a9a9a"></div>
<div class="abs mi" style="left:29.0px;top:603.6px;height:20px">Exportieren<span class="el">...</span></div><div class="abs mi sc" style="right:25.4px;top:603.6px;height:20px">Ctrl+P</div>
<svg style="left:8.2px;top:604.9px" width="17" height="17" viewBox="0 0 17 17"><path d="M3.200 7V.700h5.900L12.500 4v3" fill="#f9f9f9" stroke="#2b4a4d" stroke-width="1.400" stroke-linejoin="round"/><path d="M8.700 .700v3.200h3.600z" fill="#2b4a4d"/><rect x="0" y="6.600" width="15.400" height="5.200" rx="1" fill="#2b4a4d"/><rect x="9.600" y="7.900" width="3.200" height="1.100" fill="#f9f9f9" opacity=".8"/><rect x="3.200" y="10.200" width="9.300" height="5.300" fill="#f9f9f9" stroke="#2b4a4d" stroke-width="1.400" stroke-linejoin="round"/></svg>
<div class="abs" style="left:6.5px;top:630.7px;width:423.500px;height:1px;background:#9a9a9a"></div>
<div class="abs mi" style="left:29.0px;top:640.6px;height:20px">Sortierung</div><svg style="left:421.3px;top:646.0px" width="6" height="10" viewBox="0 0 6 10"><path d="M0 .3L5.700 5 0 9.700z" fill="#111"/></svg>
<div class="abs mi" style="left:29.0px;top:668.6px;height:20px">Filter</div><svg style="left:421.3px;top:674.0px" width="6" height="10" viewBox="0 0 6 10"><path d="M0 .3L5.700 5 0 9.700z" fill="#111"/></svg>
<div class="abs" style="left:6.5px;top:695.0px;width:423.500px;height:1px;background:#9a9a9a"></div>
<div class="abs mi" style="left:29.0px;top:706.0px;height:20px">Anhänge/Notizen<span class="el">...</span></div>
<svg style="left:5.0px;top:704.0px" width="22" height="22" viewBox="0 0 24 24"><g transform="rotate(45 12 12)"><path fill="#8a8a8a" d="M16.500 6v11.500c0 2.210-1.790 4-4 4s-4-1.790-4-4V5c0-1.380 1.120-2.500 2.500-2.500s2.500 1.120 2.500 2.500v10.500c0 .550-.450 1-1 1s-1-.450-1-1V6H10v9.500c0 1.380 1.120 2.500 2.500 2.500s2.500-1.120 2.500-2.500V5c0-2.210-1.790-4-4-4S7 2.790 7 5v12.500c0 3.040 2.460 5.500 5.500 5.500s5.500-2.460 5.500-5.500V6h-1.500z"/></g></svg>
<div class="abs" style="left:6.5px;top:734.1px;width:423.500px;height:1px;background:#9a9a9a"></div>
<div class="abs mi" style="left:29.0px;top:745.0px;height:20px">Aktualisieren</div><div class="abs mi sc" style="right:25.4px;top:745.0px;height:20px">F5</div>
<svg style="left:5.9px;top:744.3px" width="20" height="20" viewBox="0 0 24 24"><path fill="#f0a122" d="M17.65 6.35C16.2 4.9 14.21 4 12 4c-4.42 0-7.99 3.58-7.99 8s3.57 8 7.99 8c3.73 0 6.84-2.55 7.73-6h-2.08c-.82 2.33-3.04 4-5.65 4-3.31 0-6-2.69-6-6s2.69-6 6-6c1.66 0 3.14.69 4.22 1.78L13 11h7V4l-2.35 2.35z"/></svg>
</div>
</body>
</html>
